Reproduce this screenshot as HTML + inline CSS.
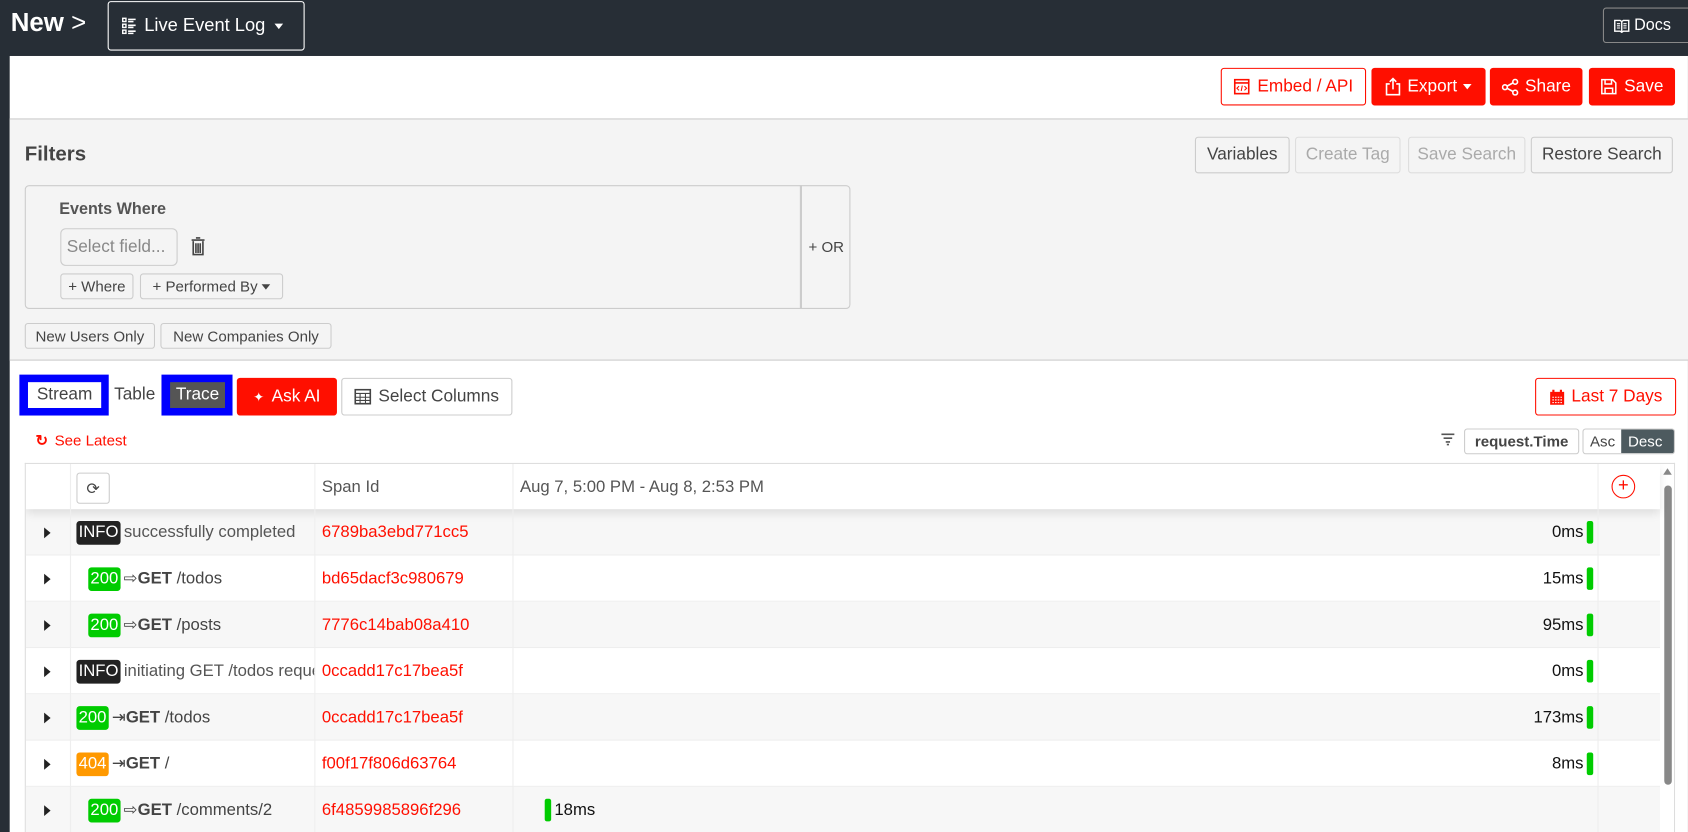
<!DOCTYPE html>
<html><head><meta charset="utf-8"><style>
*{box-sizing:border-box;margin:0;padding:0}
html,body{width:1688px;height:832px;overflow:hidden;background:#272e36}
#w{position:absolute;left:0;top:0;width:1568px;height:773px;transform:scale(1.0765);transform-origin:0 0;font-family:"Liberation Sans",sans-serif;color:#444;font-size:15px}
.a{position:absolute}
.btn{position:absolute;display:flex;align-items:center;justify-content:center;border:1px solid #ccc;border-radius:3px;background:#f4f4f4;white-space:nowrap}
.red{background:#ff0f00;border-color:#ff0f00;color:#fff;font-size:16px}
.ro{background:#fff;border-color:#ff0f00;color:#ff0f00;font-size:16px}
.row{position:absolute;left:0;width:1518px;height:43px;border-bottom:1px solid #eee}
.row div{position:absolute;top:0;height:43px;display:flex;align-items:center;white-space:nowrap;font-size:15.5px}
.tri{left:17px;width:0;height:0;border-left:6px solid #222;border-top:5px solid transparent;border-bottom:5px solid transparent;top:17px!important;height:0!important}
.tag{color:#fff;padding:2px 2px;border-radius:3px;font-size:15.5px;margin-right:3px}
.g{background:#0c0}.k{background:#222}.o{background:#f90}
.sp{color:#ff0f00;left:275px}
.du{right:62px;color:#111}
.bar{display:inline-block;width:6px;height:21px;background:#0c0;border-radius:2px;margin-left:3px}
.cl{position:absolute;top:0;bottom:0;width:1px;background:#eee}
</style></head><body><div id="w">
<div class="a" style="left:10px;top:8px;color:#fff;font-size:24px;font-weight:bold">New <span style="font-weight:normal">&gt;</span></div>
<div class="a" style="left:100px;top:1px;width:183px;height:46px;border:1px solid #fff;border-radius:3px;color:#fff;font-size:17px;display:flex;align-items:center;padding-left:12px">
<svg width="14" height="16" viewBox="0 0 14 16" style="margin-right:7px"><g fill="none" stroke="#fff" stroke-width="1.3"><rect x="1" y="1" width="3" height="3"/><rect x="1" y="6.5" width="3" height="3"/><rect x="1" y="12" width="3" height="3"/></g><g stroke="#fff" stroke-width="1.5"><path d="M6 2h7M6 4h5M6 7.5h7M6 9.5h5M6 13h7M6 15h5"/></g></svg>Live Event Log <span style="margin-left:9px;display:inline-block;border-top:5px solid #fff;border-left:4.5px solid transparent;border-right:4.5px solid transparent"></span></div>
<div class="a" style="left:1489px;top:7px;width:85px;height:33px;border:1px solid #888;border-radius:3px;color:#fff;font-size:15px;display:flex;align-items:center;padding-left:9px">
<svg width="15" height="14" viewBox="0 0 15 14" style="margin-right:4px"><path d="M1 2h5l1.5 1 1.5-1h5v10h-5l-1.5 1-1.5-1H1z M7.5 3v10" fill="none" stroke="#fff" stroke-width="1.3"/><path d="M3 5h3M3 7h3M3 9h3M9 5h3M9 7h3M9 9h3" stroke="#fff"/></svg>Docs</div>
<div class="a" style="left:9px;top:52px;width:1559px;height:721px;background:#fff"></div>
<div class="a" style="left:9px;top:110px;width:1559px;height:225px;background:#f4f4f4;border-top:1px solid #ccc;border-bottom:1px solid #ccc"></div>
<div class="btn ro" style="left:1134px;top:63px;width:135px;height:35px"><svg width="15" height="15" viewBox="0 0 15 15" style="margin-right:7px"><rect x="1" y="1" width="13" height="13" fill="none" stroke="#ff0f00" stroke-width="1.5"/><path d="M1 4h13" stroke="#ff0f00" stroke-width="1.5"/><path d="M5 7l-2 2 2 2M10 7l2 2-2 2M8 6.5l-1 5" fill="none" stroke="#ff0f00"/></svg>Embed / API</div>
<div class="btn red" style="left:1274px;top:63px;width:106px;height:35px"><svg width="14" height="17" viewBox="0 0 14 17" style="margin-right:6px"><path d="M4 6H1v10h12V6h-3M7 11V1M4 4l3-3 3 3" fill="none" stroke="#fff" stroke-width="1.5"/></svg>Export <span style="margin-left:5px;display:inline-block;border-top:5px solid #fff;border-left:4.5px solid transparent;border-right:4.5px solid transparent"></span></div>
<div class="btn red" style="left:1384px;top:63px;width:86px;height:35px"><svg width="16" height="16" viewBox="0 0 16 16" style="margin-right:6px"><g fill="none" stroke="#fff" stroke-width="1.5"><circle cx="12.5" cy="3" r="2.2"/><circle cx="3" cy="8" r="2.2"/><circle cx="12.5" cy="13" r="2.2"/><path d="M5 7l5.5-3M5 9l5.5 3"/></g></svg>Share</div>
<div class="btn red" style="left:1476px;top:63px;width:80px;height:35px"><svg width="15" height="15" viewBox="0 0 15 15" style="margin-right:7px"><path d="M1 1h10l3 3v10H1z M4 1v4h6V1 M4 14V9h7v5" fill="none" stroke="#fff" stroke-width="1.4"/></svg>Save</div>
<div class="a" style="left:23px;top:133px;font-size:19px;font-weight:bold;color:#444">Filters</div>
<div class="btn" style="left:1110px;top:127px;width:88px;height:34px;font-size:16px">Variables</div>
<div class="btn" style="left:1203px;top:127px;width:98px;height:34px;font-size:16px;color:#aaa;border-color:#ddd">Create Tag</div>
<div class="btn" style="left:1308px;top:127px;width:109px;height:34px;font-size:16px;color:#aaa;border-color:#ddd">Save Search</div>
<div class="btn" style="left:1422px;top:127px;width:132px;height:34px;font-size:16px">Restore Search</div>
<div class="a" style="left:23px;top:172px;width:767px;height:115px;border:1px solid #ccc;border-radius:4px"></div>
<div class="a" style="left:743px;top:172px;width:2px;height:115px;background:#ccc"></div>
<div class="a" style="left:55px;top:186px;font-weight:bold;font-size:15px;color:#555">Events Where</div>
<div class="btn" style="left:56px;top:212px;width:109px;height:35px;font-size:16px;color:#888;justify-content:flex-start;padding-left:5px;border-radius:5px">Select field...</div>
<svg class="a" style="left:177px;top:220px" width="14" height="18" viewBox="0 0 14 18"><path d="M5 1h4M1 3h12M2.5 4v12.5h9V4M5 6v9M7 6v9M9 6v9" fill="none" stroke="#444" stroke-width="1.5"/></svg>
<div class="btn" style="left:56px;top:254px;width:68px;height:24px;font-size:14px">+ Where</div>
<div class="btn" style="left:130px;top:254px;width:133px;height:24px;font-size:14px">+ Performed By <span style="margin-left:4px;display:inline-block;border-top:5px solid #444;border-left:4px solid transparent;border-right:4px solid transparent"></span></div>
<div class="a" style="left:751px;top:221px;font-size:14px">+ OR</div>
<div class="btn" style="left:23px;top:300px;width:121px;height:24px;font-size:14px">New Users Only</div>
<div class="btn" style="left:149px;top:300px;width:159px;height:24px;font-size:14px">New Companies Only</div>
<div class="a" style="left:18px;top:348px;width:83px;height:38px;background:#00f;padding:7px 7px 7px 8px"><div style="background:#fff;height:100%;display:flex;align-items:center;justify-content:center;font-size:16px;color:#444">Stream</div></div>
<div class="a" style="left:106px;top:358px;font-size:16px">Table</div>
<div class="a" style="left:150px;top:348px;width:66px;height:38px;background:#00f;padding:7px 7px 7px 8px"><div style="background:#555;height:100%;display:flex;align-items:center;justify-content:center;font-size:16px;color:#fff">Trace</div></div>
<div class="btn red" style="left:220px;top:351px;width:93px;height:35px"><span style="font-size:12px;margin-right:7px">✦</span>Ask AI</div>
<div class="btn" style="left:317px;top:351px;width:159px;height:35px;background:#fff;font-size:16px"><svg width="16" height="15" viewBox="0 0 16 15" style="margin-right:6px"><rect x="1" y="1" width="14" height="13" fill="none" stroke="#444" stroke-width="1.5"/><path d="M1 4.5h14M1 8h14M1 11h14M5.5 4v10M10.5 4v10" stroke="#444"/></svg>Select Columns</div>
<div class="btn ro" style="left:1426px;top:351px;width:131px;height:35px"><svg width="15" height="16" viewBox="0 0 15 16" style="margin-right:6px"><rect x="1" y="3" width="13" height="12" fill="#ff0f00"/><path d="M4 1v3M11 1v3" stroke="#ff0f00" stroke-width="2"/><path d="M3 8h9M3 10.5h9M3 13h9" stroke="#fff" stroke-dasharray="1.5 1"/></svg>Last 7 Days</div>
<div class="a" style="left:33px;top:401px;color:#ff0f00;font-size:14px"><span style="font-weight:bold;margin-right:6px">↻</span>See Latest</div>
<svg class="a" style="left:1338px;top:402px" width="14" height="12" viewBox="0 0 14 12"><path d="M1 1.5h12M3 5h8M5 8.5h4M6 11h2" stroke="#555" stroke-width="1.5"/></svg>
<div class="btn" style="left:1360px;top:398px;width:107px;height:24px;background:#fff;font-size:14px;font-weight:bold;color:#444">request.Time</div>
<div class="btn" style="left:1470px;top:398px;width:86px;height:24px;background:#fff;font-size:14px;justify-content:flex-start;overflow:hidden"><span style="padding:0 6px">Asc</span><span style="background:#4d5a5f;color:#fff;height:100%;display:flex;align-items:center;padding:0 6px;flex:1">Desc</span></div>
<div class="a" style="left:23px;top:430px;width:1533px;height:343px;border:1px solid #ddd;border-bottom:none;overflow:hidden;background:#fff">
 <div class="a" style="left:0;top:0;width:1518px;height:42px;background:#fff;box-shadow:0 4px 8px rgba(0,0,0,.1);z-index:2">
  <div class="btn" style="left:47px;top:8px;width:31px;height:29px;background:#fff"><span style="font-size:15px">⟳</span></div>
  <div class="a" style="left:275px;top:13px;font-size:15.5px;color:#555">Span Id</div>
  <div class="a" style="left:459px;top:13px;font-size:15.5px;color:#555">Aug 7, 5:00 PM - Aug 8, 2:53 PM</div>
  <div class="a" style="left:1473px;top:10px;width:22px;height:22px;border:1.5px solid #ff0f00;border-radius:50%;color:#ff0f00;text-align:center;line-height:18px;font-size:17px">+</div>
 </div>
 <div class="cl" style="left:41px;z-index:3"></div><div class="cl" style="left:268px;z-index:3"></div><div class="cl" style="left:452px;z-index:3"></div><div class="cl" style="left:1460px;z-index:3"></div>
 <div class="a" style="left:1518px;top:0;width:15px;height:343px;background:#fff"><div style="position:absolute;left:3px;top:4px;border-bottom:6px solid #888;border-left:4px solid transparent;border-right:4px solid transparent"></div><div style="position:absolute;left:4px;top:20px;width:7px;height:278px;background:#888;border-radius:4px"></div></div>
 <div class="row" style="top:42px;background:#f7f7f7"><div class="tri"></div><div style="left:47px"><span class="tag k">INFO</span><span style="color:#555">successfully completed</span></div><div class="sp">6789ba3ebd771cc5</div><div class="du">0ms<span class="bar"></span></div></div>
 <div class="row" style="top:85px"><div class="tri"></div><div style="left:58px"><span class="tag g">200</span>⇨ <b>GET</b>&nbsp;/todos</div><div class="sp">bd65dacf3c980679</div><div class="du">15ms<span class="bar"></span></div></div>
 <div class="row" style="top:128px;background:#f7f7f7"><div class="tri"></div><div style="left:58px"><span class="tag g">200</span>⇨ <b>GET</b>&nbsp;/posts</div><div class="sp">7776c14bab08a410</div><div class="du">95ms<span class="bar"></span></div></div>
 <div class="row" style="top:171px"><div class="tri"></div><div style="left:47px;width:221px;overflow:hidden"><span class="tag k">INFO</span><span style="color:#555">initiating GET /todos request</span></div><div class="sp">0ccadd17c17bea5f</div><div class="du">0ms<span class="bar"></span></div></div>
 <div class="row" style="top:214px;background:#f7f7f7"><div class="tri"></div><div style="left:47px"><span class="tag g">200</span>⇥<b>GET</b>&nbsp;/todos</div><div class="sp">0ccadd17c17bea5f</div><div class="du">173ms<span class="bar"></span></div></div>
 <div class="row" style="top:257px"><div class="tri"></div><div style="left:47px"><span class="tag o">404</span>⇥<b>GET</b>&nbsp;/</div><div class="sp">f00f17f806d63764</div><div class="du">8ms<span class="bar"></span></div></div>
 <div class="row" style="top:300px;background:#f7f7f7"><div class="tri"></div><div style="left:58px"><span class="tag g">200</span>⇨ <b>GET</b>&nbsp;/comments/2</div><div class="sp">6f4859985896f296</div><div style="left:482px;color:#111"><span class="bar" style="margin:0 3px 0 0"></span>18ms</div></div>
</div>
</div></body></html>
